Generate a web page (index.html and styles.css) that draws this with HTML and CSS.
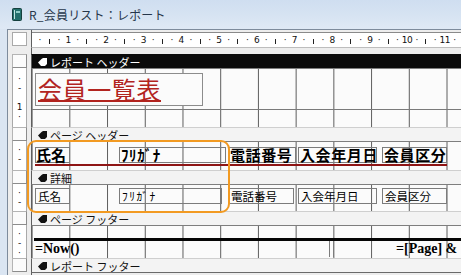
FILE: index.html
```html
<!DOCTYPE html>
<html lang="ja">
<head>
    <meta charset="UTF-8">
    <meta name="viewport" content="width=device-width, initial-scale=1.0">
    <title>R_会員リスト：レポート</title>
    <link rel="stylesheet" href="styles.css">
</head>
<body>
    <div class="titlebar">
        <svg class="app-icon" width="10" height="13" viewBox="0 0 10 13">
            <rect x="0.5" y="0.5" width="9" height="12" rx="1" fill="#23706c" stroke="#143f3d"/>
            <rect x="2" y="2" width="1" height="9" fill="#c4e6e2"/>
            <rect x="4" y="3" width="4" height="2" fill="#8fcfc8"/>
        </svg>
        <span class="title">R_会員リスト：レポート</span>
    </div>

    <div class="client">
        <!-- ルーラー -->
        <div class="row ruler-row">
            <div class="side"><div class="corner"></div></div>
            <div class="main">
                <div class="hruler">
                    <div class="cm"><span>·</span><span><i class="tick"></i></span><span>·</span><span>1</span></div>
                    <div class="cm"><span>·</span><span><i class="tick"></i></span><span>·</span><span>2</span></div>
                    <div class="cm"><span>·</span><span><i class="tick"></i></span><span>·</span><span>3</span></div>
                    <div class="cm"><span>·</span><span><i class="tick"></i></span><span>·</span><span>4</span></div>
                    <div class="cm"><span>·</span><span><i class="tick"></i></span><span>·</span><span>5</span></div>
                    <div class="cm"><span>·</span><span><i class="tick"></i></span><span>·</span><span>6</span></div>
                    <div class="cm"><span>·</span><span><i class="tick"></i></span><span>·</span><span>7</span></div>
                    <div class="cm"><span>·</span><span><i class="tick"></i></span><span>·</span><span>8</span></div>
                    <div class="cm"><span>·</span><span><i class="tick"></i></span><span>·</span><span>9</span></div>
                    <div class="cm"><span>·</span><span><i class="tick"></i></span><span>·</span><span>10</span></div>
                    <div class="cm"><span>·</span><span><i class="tick"></i></span><span>·</span><span>11</span></div>
                    <div class="cm-tail">·</div>
                </div>
            </div>
        </div>
        <div class="row gap-row">
            <div class="side"></div>
            <div class="main"></div>
        </div>

        <!-- レポートヘッダー -->
        <div class="row bar-row">
            <div class="side"><div class="selector"></div></div>
            <div class="main bar bar-active">
                <svg class="hand" width="9" height="8" viewBox="0 0 9 8"><path d="M0 4.5 L3.5 1 L5 0 H9 V6 L7 8 H3 Z" fill="currentColor"/></svg>
                レポート ヘッダー
            </div>
        </div>
        <div class="row sec-report-header">
            <div class="side">
                <div class="vruler vruler-first"><span>·</span><span>-</span><span></span><span>1</span><span>·</span></div>
            </div>
            <div class="main section hline">
                <div class="report-title">会員一覧表</div>
            </div>
        </div>

        <!-- ページヘッダー -->
        <div class="row bar-row">
            <div class="side"><div class="selector"></div></div>
            <div class="main bar">
                <svg class="hand" width="9" height="8" viewBox="0 0 9 8"><path d="M0 4.5 L3.5 1 L5 0 H9 V6 L7 8 H3 Z" fill="currentColor"/></svg>
                ページ ヘッダー
            </div>
        </div>
        <div class="row sec-page-header">
            <div class="side">
                <div class="vruler"><span>·</span><span>-</span></div>
            </div>
            <div class="main section">
                <div class="controls head-labels">
                    <div class="ctl c-name">氏名</div>
                    <div class="ctl c-kana kana">ﾌﾘｶﾞﾅ</div>
                    <div class="ctl c-tel">電話番号</div>
                    <div class="ctl c-date">入会年月日</div>
                    <div class="ctl c-kind">会員区分</div>
                </div>
                <div class="red-line"></div>
            </div>
        </div>

        <!-- 詳細 -->
        <div class="row bar-row">
            <div class="side"><div class="selector"></div></div>
            <div class="main bar">
                <svg class="hand" width="9" height="8" viewBox="0 0 9 8"><path d="M0 4.5 L3.5 1 L5 0 H9 V6 L7 8 H3 Z" fill="currentColor"/></svg>
                詳細
            </div>
        </div>
        <div class="row sec-detail">
            <div class="side">
                <div class="vruler"><span>·</span><span>-</span></div>
            </div>
            <div class="main section">
                <div class="controls detail-boxes">
                    <div class="ctl c-name">氏名</div>
                    <div class="ctl c-kana-d kana">ﾌﾘｶﾞﾅ</div>
                    <div class="ctl c-tel-d">電話番号</div>
                    <div class="ctl c-date">入会年月日</div>
                    <div class="ctl c-kind">会員区分</div>
                </div>
            </div>
        </div>

        <!-- ページフッター -->
        <div class="row bar-row">
            <div class="side"><div class="selector"></div></div>
            <div class="main bar">
                <svg class="hand" width="9" height="8" viewBox="0 0 9 8"><path d="M0 4.5 L3.5 1 L5 0 H9 V6 L7 8 H3 Z" fill="currentColor"/></svg>
                ページ フッター
            </div>
        </div>
        <div class="row sec-page-footer">
            <div class="side">
                <div class="vruler"><span>·</span><span>-</span><span>·</span></div>
            </div>
            <div class="main section">
                <div class="thick-line"></div>
                <div class="footer-fields">
                    <div class="f-now">=Now()</div>
                    <div class="f-page">=[Page] &amp;</div>
                </div>
            </div>
        </div>

        <!-- レポートフッター -->
        <div class="row bar-row">
            <div class="side"><div class="selector"></div></div>
            <div class="main bar">
                <svg class="hand" width="9" height="8" viewBox="0 0 9 8"><path d="M0 4.5 L3.5 1 L5 0 H9 V6 L7 8 H3 Z" fill="currentColor"/></svg>
                レポート フッター
            </div>
        </div>
        <div class="row end-row">
            <div class="side"></div>
            <div class="main"></div>
        </div>
    </div>

    <div class="highlight"></div>
</body>
</html>
```

FILE: styles.css
```css
* {
    margin: 0;
    padding: 0;
    box-sizing: border-box;
}

body {
    width: 461px;
    height: 275px;
    overflow: hidden;
    position: relative;
    background: #dae5f2;
    font-family: "Noto Sans CJK JP", "Noto Sans", sans-serif;
}

.titlebar {
    height: 29px;
    display: flex;
    align-items: center;
    gap: 7px;
    padding-left: 12px;
    background: linear-gradient(#cfdef0 0%, #d6e3f2 50%, #dfe9f5 100%);
}

.title {
    font-size: 12px;
    color: #26364a;
    letter-spacing: 0.2px;
}

.client {
    margin-left: 7px;
    height: 246px;
    border-top: 1px solid #7d8b9c;
    border-left: 1px solid #7d8b9c;
    background: #ededed;
    overflow: hidden;
}

.row {
    display: flex;
}

.side {
    width: 23px;
    flex: none;
    padding-left: 4px;
}

.main {
    flex: 1;
    border-left: 1px solid #5e5e5e;
    min-width: 0;
}

/* ルーラー */
.ruler-row {
    height: 17px;
}

.corner {
    width: 15px;
    height: 14px;
    margin-top: 2px;
    background: #fff;
    border: 1px solid #a9a9a9;
}

.hruler {
    display: flex;
    height: 15px;
    margin-top: 2px;
    padding-left: 3px;
    background: #fff;
    border-top: 1px solid #8a8a8a;
    font-family: "DejaVu Sans", sans-serif;
    font-size: 9px;
    line-height: 15px;
    color: #111;
    white-space: nowrap;
    overflow: hidden;
}

.cm {
    flex: none;
    width: 37.72px;
    display: flex;
}

.cm span {
    flex: 1;
    text-align: center;
    letter-spacing: -0.5px;
}

.cm-tail {
    flex: none;
    width: 9.43px;
    text-align: center;
}

.tick {
    display: inline-block;
    width: 1px;
    height: 5px;
    background: #222;
    vertical-align: -1px;
}

.gap-row {
    height: 7px;
}

.gap-row .main {
    border-top: 1px solid #bdbdbd;
}

/* セクションバー */
.bar-row {
    height: 14px;
}

.selector {
    width: 15px;
    height: 14px;
    background: #fbfbfb;
    border: 1px solid #b4b4b4;
    border-right-color: #8c8c8c;
    border-bottom-color: #8c8c8c;
}

.bar {
    display: flex;
    align-items: center;
    gap: 3px;
    padding-left: 6px;
    font-size: 11px;
    line-height: 14px;
    color: #111;
    background: #f3f3f3;
    border-top: 1px solid #cfcfcf;
    white-space: nowrap;
}

.bar-active {
    background: #0b0b0b;
    color: #fff;
    border-top-color: #0b0b0b;
}

.hand {
    flex: none;
}

/* 縦ルーラー */
.vruler {
    width: 15px;
    height: 100%;
    display: flex;
    flex-direction: column;
    padding-top: 4.7px;
    background: #fff;
    border-left: 1px solid #a9a9a9;
    border-right: 1px solid #a9a9a9;
    font-family: "DejaVu Sans", sans-serif;
    font-size: 9px;
    color: #111;
    text-align: center;
}

.vruler span {
    height: 9.43px;
    line-height: 9.43px;
}

.vruler-first {
    padding-top: 7px;
}

/* セクション本体 */
.section {
    position: relative;
    background-color: #fbfbfb;
    background-image: linear-gradient(90deg, transparent 0 37px, #5c5c5c 37px 38px);
    background-size: 37.72px 100%;
    background-position: 0.6px 0;
    border-top: 1px solid #7e7e7e;
}

.sec-report-header {
    height: 59px;
}

.hline {
    background-image:
        linear-gradient(#7a7a7a, #7a7a7a),
        linear-gradient(90deg, transparent 0 37px, #5c5c5c 37px 38px);
    background-size: 100% 1px, 37.72px 100%;
    background-position: 0 40px, 0.6px 0;
    background-repeat: no-repeat, repeat;
}

.report-title {
    width: 168px;
    height: 33px;
    margin: 4px 0 0 3px;
    padding-left: 2px;
    background: #fbfbfb;
    border: 1px solid #8c8c8c;
    color: #b2241f;
    font-size: 24px;
    line-height: 30px;
    letter-spacing: 0.6px;
    text-decoration: underline;
    text-decoration-thickness: 2px;
    text-underline-offset: 1px;
}

.sec-page-header {
    height: 29px;
}

.sec-detail {
    height: 27px;
}

.controls {
    display: flex;
    padding-left: 3px;
}

.ctl {
    flex: none;
    height: 16px;
    border: 1px solid #7c7c7c;
    white-space: nowrap;
}

.head-labels {
    margin-top: 5px;
}

.head-labels .ctl {
    font-size: 15px;
    font-weight: bold;
    line-height: 14px;
    letter-spacing: 0.6px;
    padding-left: 1px;
    color: #000;
}

.head-labels .c-name {
    letter-spacing: 0;
    padding-left: 0;
}

.detail-boxes {
    margin-top: 3px;
}

.detail-boxes .ctl {
    font-size: 11.5px;
    line-height: 14px;
    padding-left: 2px;
    color: #000;
}

.kana {
    letter-spacing: 2px;
}

.detail-boxes .kana {
    letter-spacing: 1.5px;
}

.c-name { width: 35px; }
.c-kana { width: 107px; margin-left: 49px; }
.c-tel { width: 68px; margin-left: 2px; }
.c-date { width: 79px; margin-left: 2px; }
.c-kind { width: 65px; margin-left: 5px; }
.c-kana-d { width: 103px; margin-left: 49px; }
.c-tel-d { width: 66px; margin-left: 6px; }

.detail-boxes .c-date { margin-left: 4px; }

.red-line {
    width: 412px;
    height: 2px;
    margin: 1px 0 0 3px;
    background: #8e1515;
}

.sec-page-footer {
    height: 33px;
}

.thick-line {
    height: 3px;
    margin: 12px 0 0 2px;
    background: #050505;
}

.footer-fields {
    display: flex;
    height: 16px;
    padding-left: 3px;
    font-family: "Liberation Serif", serif;
    font-size: 14px;
    font-weight: bold;
    line-height: 15px;
    color: #000;
    white-space: nowrap;
}

.f-now {
    width: 295px;
    flex: none;
    border-right: 1px solid #7c7c7c;
}

.f-page {
    flex: none;
    margin-left: 3px;
    padding-left: 62px;
    border-left: 1px solid #7c7c7c;
}

.end-row {
    height: 4px;
}

.end-row .main {
    border-top: 1px solid #6a6a6a;
}

/* 選択範囲の強調 */
.highlight {
    position: absolute;
    left: 27px;
    top: 140px;
    width: 203px;
    height: 73px;
    border: 2px solid #f29a22;
    border-radius: 9px;
    pointer-events: none;
}
```
